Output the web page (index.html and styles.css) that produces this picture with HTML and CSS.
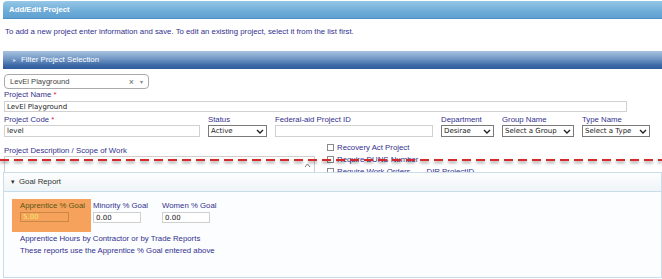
FILE: index.html
```html
<!DOCTYPE html>
<html lang="en">
<head>
    <meta charset="UTF-8">
    <meta name="viewport" content="width=device-width, initial-scale=1.0">
    <title>Add/Edit Project</title>
    <link rel="stylesheet" href="styles.css">
</head>
<body>
    <div class="title-bar">Add/Edit Project</div>
    <p class="intro">To add a new project enter information and save. To edit an existing project, select it from the list first.</p>

    <div class="filter-bar"><span class="caret">&#9656;</span>Filter Project Selection</div>

    <div class="form">
        <div class="picker">
            <span>LevEl Playground</span>
            <span class="picker-clear">&times;</span>
            <span class="picker-arrow">&#9662;</span>
        </div>

        <label class="lbl" for="projectName">Project Name <span class="req">*</span></label>
        <input type="text" class="txt name" id="projectName" value="LevEl Playground">

        <div class="field-row">
            <div class="field">
                <label class="lbl" for="projectCode">Project Code <span class="req">*</span></label>
                <input type="text" class="txt code" id="projectCode" value="level">
            </div>
            <div class="field">
                <label class="lbl">Status</label>
                <div class="sel status">
                    <select><option>Active</option></select>
                    <svg class="chev" width="8" height="5" viewBox="0 0 8 5"><path d="M1 1 L4 4 L7 1" fill="none" stroke="#222" stroke-width="1.4"/></svg>
                </div>
            </div>
            <div class="field">
                <label class="lbl" for="fedId">Federal-aid Project ID</label>
                <input type="text" class="txt fed" id="fedId">
            </div>
            <div class="field">
                <label class="lbl">Department</label>
                <div class="sel dept">
                    <select><option>Desirae</option></select>
                    <svg class="chev" width="8" height="5" viewBox="0 0 8 5"><path d="M1 1 L4 4 L7 1" fill="none" stroke="#222" stroke-width="1.4"/></svg>
                </div>
            </div>
            <div class="field">
                <label class="lbl">Group Name</label>
                <div class="sel group">
                    <select><option>Select a Group</option></select>
                    <svg class="chev" width="8" height="5" viewBox="0 0 8 5"><path d="M1 1 L4 4 L7 1" fill="none" stroke="#222" stroke-width="1.4"/></svg>
                </div>
            </div>
            <div class="field">
                <label class="lbl">Type Name</label>
                <div class="sel type">
                    <select><option>Select a Type</option></select>
                    <svg class="chev" width="8" height="5" viewBox="0 0 8 5"><path d="M1 1 L4 4 L7 1" fill="none" stroke="#222" stroke-width="1.4"/></svg>
                </div>
            </div>
        </div>

        <div class="desc-row">
            <div class="desc">
                <label class="lbl" for="desc">Project Description / Scope of Work</label>
                <div class="area-wrap">
                    <textarea id="desc"></textarea>
                    <svg class="area-up" width="7" height="5" viewBox="0 0 7 5"><path d="M1 4 L3.5 1 L6 4" fill="none" stroke="#777" stroke-width="1"/></svg>
                </div>
            </div>
            <div class="checks">
                <label class="chk"><input type="checkbox"> Recovery Act Project</label>
                <label class="chk"><input type="checkbox"> Require DUNS Number</label>
                <label class="chk"><input type="checkbox"> Require Work Orders <span class="dir">DIR ProjectID</span></label>
            </div>
        </div>
    </div>

    <div class="cut-line"></div>

    <div class="goal-panel">
        <div class="goal-head"><span class="caret">&#9662;</span>Goal Report</div>
        <div class="goal-row">
            <div class="goal-hl">
                <label class="lbl">Apprentice % Goal</label>
                <input type="text" class="txt goal" value="5.00">
            </div>
            <div class="goal-field">
                <label class="lbl">Minority % Goal</label>
                <input type="text" class="txt goal" value="0.00">
            </div>
            <div class="goal-field women">
                <label class="lbl">Women % Goal</label>
                <input type="text" class="txt goal" value="0.00">
            </div>
        </div>
        <div class="reports">
            Apprentice Hours by Contractor or by Trade Reports<br>
            These reports use the Apprentice % Goal entered above
        </div>
    </div>
</body>
</html>
```

FILE: styles.css
```css
body {
    margin: 0;
    width: 662px;
    height: 279px;
    overflow: hidden;
    position: relative;
    font-family: "Liberation Sans", Arial, sans-serif;
    font-size: 7.8px;
    color: #33308e;
    background-color: #fff;
}

.title-bar {
    margin: 1px 0 0 3px;
    height: 18px;
    box-sizing: border-box;
    padding-left: 6px;
    line-height: 17px;
    color: #fff;
    font-weight: bold;
    background: linear-gradient(#96c7e6, #6eacd8 60%, #5fa1d2);
    border-bottom: 1px solid #4f90c3;
    border-radius: 4px 0 0 0;
}

.intro {
    margin: 0;
    height: 32px;
    box-sizing: border-box;
    padding: 8px 0 0 5px;
    line-height: 10px;
    font-size: 7.8px;
}

.filter-bar {
    margin-left: 3px;
    height: 18px;
    padding-left: 10px;
    line-height: 18px;
    color: #fff;
    background: linear-gradient(#a9c3e0, #7096c4 45%, #3e6ba7 78%, #2d5b9a);
}

.filter-bar .caret {
    font-size: 6px;
    color: #c9d8ec;
    margin-right: 5px;
}

.form {
    height: 103px;
    overflow: hidden;
    padding-left: 4px;
}

.picker {
    margin-top: 5px;
    width: 145px;
    height: 15px;
    box-sizing: border-box;
    padding: 0 5px;
    display: flex;
    align-items: center;
    border: 1px solid #aaa;
    border-radius: 4px;
    color: #444;
    font-size: 7.6px;
}

.picker-clear {
    margin-left: auto;
    font-size: 9px;
    color: #666;
}

.picker-arrow {
    margin-left: 6px;
    font-size: 6px;
    color: #888;
}

.lbl {
    display: block;
    height: 12px;
    line-height: 12px;
    white-space: nowrap;
}

.req {
    color: #e0242e;
}

.txt {
    display: block;
    margin: 0;
    height: 11px;
    box-sizing: border-box;
    padding: 0 2px;
    border: 1px solid #d0d0d0;
    font-family: "DejaVu Sans", Verdana, sans-serif;
    font-size: 7px;
    color: #222;
    background: #fff;
    outline: none;
}

.name {
    width: 623px;
}

.field-row {
    display: flex;
    gap: 8px;
    margin-top: 3px;
}

.field .lbl {
    height: 10px;
    line-height: 10px;
}

.field .txt {
    height: 12px;
}

.code {
    width: 196px;
}

.fed {
    width: 158px;
}

.sel {
    position: relative;
    height: 12px;
}

.sel select {
    appearance: none;
    -webkit-appearance: none;
    width: 100%;
    height: 12px;
    margin: 0;
    padding: 0 0 0 2px;
    box-sizing: border-box;
    border: 1px solid #7a7a7a;
    border-radius: 0;
    background: #fff;
    font-family: "DejaVu Sans", Verdana, sans-serif;
    font-size: 7px;
    line-height: 10px;
    color: #222;
}

.sel .chev {
    position: absolute;
    right: 3px;
    top: 4px;
}

.status {
    width: 59px;
}

.dept {
    width: 53px;
}

.group {
    width: 72px;
}

.type {
    width: 68px;
}

.desc-row {
    display: flex;
}

.desc {
    width: 311px;
    padding-top: 9px;
}

.desc .lbl {
    height: 10px;
    line-height: 10px;
}

.area-wrap {
    position: relative;
}

.area-wrap textarea {
    display: block;
    width: 311px;
    height: 40px;
    box-sizing: border-box;
    margin: 0;
    border: 1px solid #cfcfcf;
    resize: none;
}

.area-up {
    position: absolute;
    right: 4px;
    top: 7px;
}

.checks {
    margin-left: 10px;
    padding-top: 4px;
}

.chk {
    display: flex;
    align-items: center;
    height: 12px;
    white-space: nowrap;
}

.chk input {
    appearance: none;
    -webkit-appearance: none;
    width: 7px;
    height: 7px;
    margin: 0 3px 0 2px;
    border: 1px solid #8a8a8a;
    background: #fff;
}

.dir {
    margin-left: 16px;
}

.cut-line {
    position: absolute;
    left: 0;
    right: 0;
    top: 159px;
    height: 2px;
    background: repeating-linear-gradient(90deg, #d42a2a 0 9px, transparent 9px 14px);
    filter: drop-shadow(0 2px 1.5px rgba(0, 0, 0, 0.4));
}

.goal-panel {
    margin-left: 3px;
    height: 106px;
    box-sizing: border-box;
    border: 1px solid #c9dcea;
    background-color: #fbfdfe;
}

.goal-head {
    height: 18px;
    padding-left: 7px;
    line-height: 18px;
    color: #333;
    background: linear-gradient(#fdfefe, #eef4f8);
    border-bottom: 1px solid #c9dcea;
}

.goal-head .caret {
    font-size: 7px;
    margin-right: 4px;
}

.goal-row {
    display: flex;
    align-items: flex-start;
    margin: 7px 0 0 8px;
}

.goal-row .lbl {
    height: 10px;
    line-height: 10px;
}

.goal-hl {
    width: 79px;
    height: 33px;
    box-sizing: border-box;
    padding: 2px 0 0 8px;
    background-color: #f6a25c;
}

.goal-hl .lbl {
    color: #585615;
}

.goal-hl .txt {
    width: 49px;
    height: 10px;
    margin-top: 1px;
    border-color: #c98845;
    background: transparent;
    color: #f4ec6a;
}

.goal-field {
    margin-left: 2px;
    padding-top: 2px;
}

.goal-field .txt {
    width: 48px;
    margin-top: 1px;
}

.women {
    margin-left: 14px;
}

.reports {
    margin: 1px 0 0 16px;
    line-height: 12px;
}
```
